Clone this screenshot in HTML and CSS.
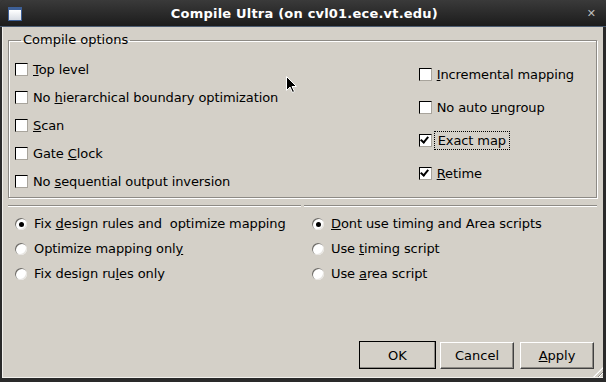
FILE: index.html
```html
<!DOCTYPE html>
<html lang="en">
<head>
  <meta charset="UTF-8" />
  <title>Compile Ultra</title>
  <link rel="stylesheet" href="styles.css">
</head>
<body>
  <div class="window">
    <!-- Barra de titulo -->
    <div class="titlebar">
      <span class="win-icon"></span>
      <span class="title">Compile Ultra (on cvl01.ece.vt.edu)</span>
      <span class="close">&#x2715;</span>
    </div>

    <div class="content">
      <fieldset class="group">
        <legend>Compile options</legend>
        <div class="cols">
          <div class="col-left">
            <label class="check"><span class="box"></span><span><u>T</u>op level</span></label>
            <label class="check"><span class="box"></span><span>No <u>h</u>ierarchical boundary optimization</span></label>
            <label class="check"><span class="box"></span><span><u>S</u>can</span></label>
            <label class="check"><span class="box"></span><span>Gate <u>C</u>lock</span></label>
            <label class="check"><span class="box"></span><span>No <u>s</u>equential output inversion</span></label>
          </div>
          <div class="col-right">
            <label class="check"><span class="box"></span><span><u>I</u>ncremental mapping</span></label>
            <label class="check"><span class="box"></span><span>No auto <u>u</u>ngroup</span></label>
            <label class="check"><span class="box checked"></span><span class="focus">Exact map</span></label>
            <label class="check"><span class="box checked"></span><span><u>R</u>etime</span></label>
          </div>
        </div>
      </fieldset>

      <div class="separators">
        <div class="sep"></div>
        <div class="sep"></div>
      </div>

      <div class="radios">
        <div class="radio-col first">
          <label class="radio"><span class="dot on"></span><span>Fix <u>d</u>esign rules and&nbsp; optimize mapping</span></label>
          <label class="radio"><span class="dot"></span><span>Optimize mapping onl<u>y</u></span></label>
          <label class="radio"><span class="dot"></span><span>Fix design ru<u>l</u>es only</span></label>
        </div>
        <div class="radio-col">
          <label class="radio"><span class="dot on"></span><span><u>D</u>ont use timing and Area scripts</span></label>
          <label class="radio"><span class="dot"></span><span>Use <u>t</u>iming script</span></label>
          <label class="radio"><span class="dot"></span><span>Use <u>a</u>rea script</span></label>
        </div>
      </div>

      <div class="buttons">
        <button class="btn default">OK</button>
        <button class="btn">Cancel</button>
        <button class="btn"><u>A</u>pply</button>
      </div>
      <span class="grip"></span>
    </div>

    <!-- ponteiro do mouse -->
    <svg class="cursor" width="12" height="18" viewBox="0 0 12 18">
      <path d="M0.5 0.5 L0.5 14.5 L4 11 L6.5 16.5 L8.5 15.5 L6 10.5 L10.5 10.5 Z" fill="#000" stroke="#fff" stroke-width="1"/>
    </svg>
  </div>
</body>
</html>
```

FILE: styles.css
```css
/* Estilos gerais */
body {
  margin: 0;
  background-color: #3a3a3a;
  font-family: "DejaVu Sans", sans-serif;
  font-size: 13px;
  color: #000;
}

.window {
  position: relative;
  width: 606px;
  height: 382px;
  box-sizing: border-box;
  background-color: #2a2a2a;
  border-radius: 5px 5px 0 0;
  overflow: hidden;
  display: flex;
  flex-direction: column;
}

/* Barra de titulo */
.titlebar {
  height: 26px;
  flex: none;
  display: flex;
  align-items: center;
  padding: 0 10px 0 8px;
  background: linear-gradient(#3a3a3a, #1c1c1c);
  border-bottom: 1px solid #4d5d72;
  color: #fff;
}

.win-icon {
  width: 12px;
  height: 10px;
  border: 1px solid #3d5f96;
  border-top-width: 3px;
  background: linear-gradient(#ffffff, #d8dce4);
  margin-top: 2px;
}

.title {
  flex: 1;
  text-align: center;
  font-weight: bold;
  font-size: 13px;
  letter-spacing: 0.2px;
}

.close {
  color: #bdbdbd;
  font-weight: bold;
  font-size: 11px;
}

/* Area principal */
.content {
  position: relative;
  flex: 1;
  margin: 0 3px 4px 2px;
  background-color: #d4d0c8;
  border-left: 1px solid #f2f0ec;
  border-bottom: 1px solid #f2f0ec;
  padding: 5px 6px 0 5px;
}

.group {
  margin: 0;
  padding: 0 0 2px 6px;
  border: 1px solid #8d8a85;
  box-shadow: inset 1px 1px 0 #fff, 1px 1px 0 #fff;
}

.group legend {
  padding: 0 2px;
  margin-left: 6px;
  line-height: 16px;
}

.cols {
  display: flex;
  justify-content: space-between;
  padding-top: 7px;
}

.col-left .check {
  height: 28px;
}

.col-right {
  padding-right: 22px;
  padding-top: 3px;
}

.col-right .check {
  height: 33px;
}

.check,
.radio {
  display: flex;
  align-items: center;
  white-space: nowrap;
  letter-spacing: -0.1px;
}

.box {
  width: 11px;
  height: 11px;
  flex: none;
  margin-right: 5px;
  background-color: #fff;
  border-top: 1px solid #000;
  border-left: 1px solid #000;
  border-right: 1px solid #a8a49c;
  border-bottom: 1px solid #a8a49c;
  position: relative;
}

.box.checked::after {
  content: "";
  position: absolute;
  left: 2px;
  top: 0;
  width: 3px;
  height: 6px;
  border-right: 2px solid #000;
  border-bottom: 2px solid #000;
  transform: rotate(40deg);
}

.focus {
  outline: 1px dotted #000;
  outline-offset: 1px;
  padding: 0 2px;
  margin-left: -1px;
}

/* Separadores */
.separators {
  display: flex;
  gap: 3px;
  margin-top: 7px;
}

.sep {
  flex: 1;
  height: 1px;
  background-color: #8d8a85;
  border-bottom: 1px solid #fff;
}

/* Botoes de opcao */
.radios {
  display: flex;
  padding-top: 4px;
  padding-left: 7px;
}

.radio-col {
  flex: 1;
  min-width: 0;
}

.radio-col.first {
  flex: none;
  width: 297px;
}

.radio {
  height: 25px;
}

.dot {
  width: 12px;
  height: 12px;
  flex: none;
  margin-right: 7px;
  border-radius: 50%;
  background-color: #fff;
  box-shadow: inset 1px 1px 0 #6e6b66, inset -1px -1px 0 #e6e4e0;
  position: relative;
}

.dot.on::after {
  content: "";
  position: absolute;
  left: 4px;
  top: 4px;
  width: 5px;
  height: 5px;
  border-radius: 50%;
  background-color: #000;
}

/* Botoes */
.buttons {
  position: absolute;
  right: 9px;
  bottom: 8px;
  display: flex;
  align-items: flex-end;
  gap: 6px;
}

.btn {
  font-family: "DejaVu Sans", sans-serif;
  font-size: 13px;
  width: 74px;
  height: 27px;
  background-color: #d4d0c8;
  border: 1px solid;
  border-color: #fff #404040 #404040 #fff;
  box-shadow: inset -1px -1px 0 #8d8a85;
  padding: 0;
  color: #000;
}

.btn.default {
  width: 77px;
  height: 28px;
  margin-right: -2px;
  outline: 1px solid #000;
  outline-offset: -1px;
}

.grip {
  position: absolute;
  right: 0;
  bottom: 0;
  width: 10px;
  height: 10px;
  background: repeating-linear-gradient(135deg, transparent 0 2px, #8d8a85 2px 3px, #fff 3px 4px);
  clip-path: polygon(100% 0, 100% 100%, 0 100%);
}

.cursor {
  position: absolute;
  left: 286px;
  top: 76px;
}
```
